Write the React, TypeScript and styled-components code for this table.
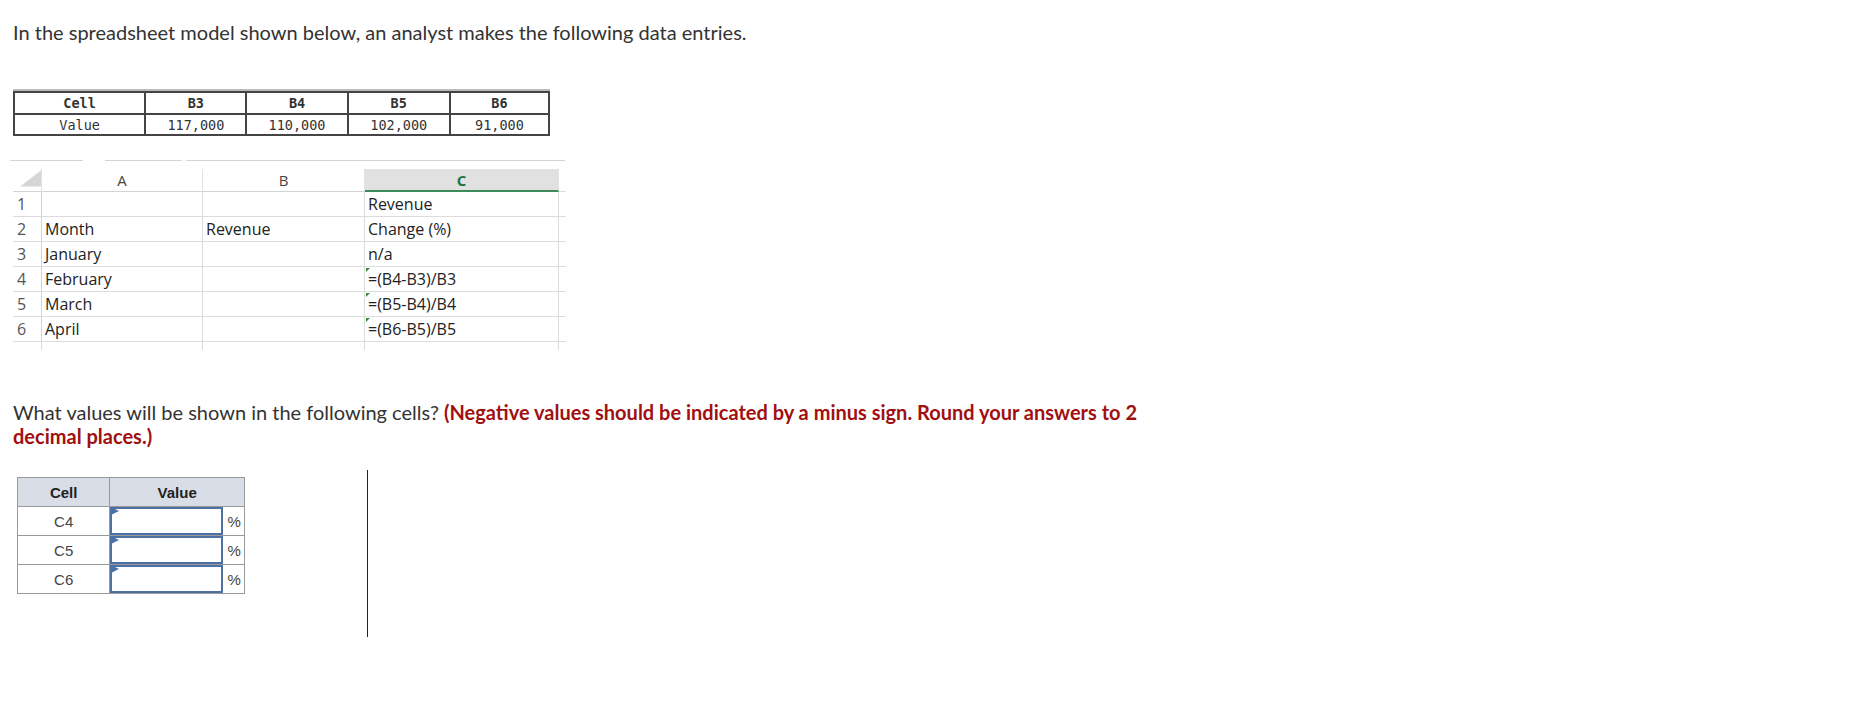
import styled, { createGlobalStyle } from "styled-components";

const GlobalStyle = createGlobalStyle`
  body {
    margin: 0;
    background: #fff;
  }
`;

// 입력 데이터
const entries = [
  { cell: "B3", value: "117,000", w: 101 },
  { cell: "B4", value: "110,000", w: 101 },
  { cell: "B5", value: "102,000", w: 102 },
  { cell: "B6", value: "91,000", w: 99 },
];

// 엑셀 시트 행
const sheetRows = [
  { n: 1, a: "", b: "", c: "Revenue", flag: false },
  { n: 2, a: "Month", b: "Revenue", c: "Change (%)", flag: false },
  { n: 3, a: "January", b: "", c: "n/a", flag: false },
  { n: 4, a: "February", b: "", c: "=(B4-B3)/B3", flag: true },
  { n: 5, a: "March", b: "", c: "=(B5-B4)/B4", flag: true },
  { n: 6, a: "April", b: "", c: "=(B6-B5)/B5", flag: true },
];

const answers = ["C4", "C5", "C6"];

export default function App() {
  return (
    <>
      <GlobalStyle />
      <Page>
        <Intro>
          In the spreadsheet model shown below, an analyst makes the following
          data entries.
        </Intro>

        <DataTable>
          <colgroup>
            <col style={{ width: 131 }} />
            {entries.map((e) => (
              <col key={e.cell} style={{ width: e.w }} />
            ))}
          </colgroup>
          <tbody>
            <tr>
              <DataHead>Cell</DataHead>
              {entries.map((e) => (
                <DataHead key={e.cell}>{e.cell}</DataHead>
              ))}
            </tr>
            <tr>
              <DataCell>Value</DataCell>
              {entries.map((e) => (
                <DataCell key={e.cell}>{e.value}</DataCell>
              ))}
            </tr>
          </tbody>
        </DataTable>

        <Sheet>
          <CropLines>
            <CropLine $w={73} />
            <CropLine $w={77} />
            <CropLine $w={379} />
          </CropLines>
          <SheetGrid>
            <Corner>
              <svg width="22" height="17" viewBox="0 0 22 17">
                <polygon points="22,0 22,17 0,17" fill="#d6d6d6" />
              </svg>
            </Corner>
            <ColHead>A</ColHead>
            <ColHead>B</ColHead>
            <ColHead $active>C</ColHead>
            <Stub />
            {sheetRows.map((r) => (
              <Row key={r.n}>
                <RowNum>{r.n}</RowNum>
                <SheetCell>{r.a}</SheetCell>
                <SheetCell>{r.b}</SheetCell>
                <SheetCell $flag={r.flag}>{r.c}</SheetCell>
                <Stub />
              </Row>
            ))}
            <Row>
              <TailCell />
              <TailCell />
              <TailCell />
              <TailCell />
              <Stub $tail />
            </Row>
          </SheetGrid>
        </Sheet>

        <Question>
          What values will be shown in the following cells?{" "}
          <Hint>
            (Negative values should be indicated by a minus sign. Round your
            answers to 2
          </Hint>{" "}
          <Hint>decimal places.)</Hint>
        </Question>

        <AnswerArea>
          <AnswerTable>
            <colgroup>
              <col style={{ width: 92 }} />
              <col style={{ width: 134 }} />
            </colgroup>
            <thead>
              <tr>
                <AnswerHead>Cell</AnswerHead>
                <AnswerHead>Value</AnswerHead>
              </tr>
            </thead>
            <tbody>
              {answers.map((a) => (
                <tr key={a}>
                  <AnswerCell>{a}</AnswerCell>
                  <ValueCell>
                    <ValueRow>
                      <InputWrap>
                        <Flag />
                        <ValueInput type="text" aria-label={a} />
                      </InputWrap>
                      <Percent>%</Percent>
                    </ValueRow>
                  </ValueCell>
                </tr>
              ))}
            </tbody>
          </AnswerTable>
          <Divider />
        </AnswerArea>
      </Page>
    </>
  );
}

const Page = styled.div`
  padding: 18px 0 60px 13px;
  font-family: Lato, "Open Sans", sans-serif;
  color: #333;
`;

const Intro = styled.p`
  margin: 0;
  font-size: 20px;
  line-height: 28px;
  color: #333;
`;

const DataTable = styled.table`
  margin-top: 45px;
  table-layout: fixed;
  width: 537px;
  border-collapse: collapse;
  border: 2px solid #444;
  box-shadow: 0 -2px 0 #bbb;
  font-family: "DejaVu Sans Mono", "Liberation Mono", monospace;
  font-size: 13.5px;
  color: #333;
`;

const DataHead = styled.td`
  height: 20px;
  padding: 0;
  border: 2px solid #444;
  text-align: center;
  font-weight: bold;
`;

const DataCell = styled.td`
  height: 19px;
  padding: 0;
  border: 2px solid #444;
  text-align: center;
`;

const Sheet = styled.div`
  margin-top: 24px;
  width: 553px;
  font-family: "Open Sans", "Noto Sans", sans-serif;
  font-size: 16px;
  color: #222;
`;

const CropLines = styled.div`
  display: flex;
  gap: 22px;
  height: 8px;
  margin-left: -3px;
`;

const CropLine = styled.div<{ $w: number }>`
  width: ${({ $w }) => $w}px;
  height: 1px;
  background: #d4d4d4;
  &:nth-child(3) {
    margin-left: -18px;
  }
`;

const SheetGrid = styled.div`
  display: grid;
  grid-template-columns: 29px 161px 162px 194px 7px;
  grid-template-rows: 24px repeat(6, 25px) 8px;
`;

const Row = styled.div`
  display: contents;
`;

const Corner = styled.div`
  display: flex;
  align-items: flex-end;
  justify-content: flex-end;
  padding: 0 0 4px 7px;
  border-bottom: 1px solid #d4d4d4;
  border-right: 1px solid #e2e2e2;
`;

const ColHead = styled.div<{ $active?: boolean }>`
  display: flex;
  align-items: center;
  justify-content: center;
  margin-top: 1px;
  background: ${({ $active }) => ($active ? "#e1e1e1" : "#fff")};
  color: ${({ $active }) => ($active ? "#217346" : "#444")};
  font-weight: ${({ $active }) => ($active ? 700 : 400)};
  font-size: 15px;
  border-bottom: ${({ $active }) => ($active ? "2px solid #3f8a5c" : "1px solid #d4d4d4")};
  border-right: 1px solid #e2e2e2;
`;

const RowNum = styled.div`
  display: flex;
  align-items: center;
  padding-left: 4px;
  color: #555;
  border-bottom: 1px solid #dcdcdc;
  border-right: 1px solid #d4d4d4;
`;

const SheetCell = styled.div<{ $flag?: boolean }>`
  position: relative;
  display: flex;
  align-items: center;
  padding-left: 3px;
  white-space: nowrap;
  border-bottom: 1px solid #dcdcdc;
  border-right: 1px solid #dcdcdc;

  &::before {
    content: "";
    display: ${({ $flag }) => ($flag ? "block" : "none")};
    position: absolute;
    top: 1px;
    left: 1px;
    border-top: 4px solid #3a8a3a;
    border-right: 4px solid transparent;
  }
`;

const Stub = styled.div<{ $tail?: boolean }>`
  border-bottom: ${({ $tail }) => ($tail ? "none" : "1px solid #dcdcdc")};
`;

const TailCell = styled.div`
  border-right: 1px solid #dcdcdc;
`;

const Question = styled.p`
  margin: 50px 0 0;
  width: 1165px;
  font-size: 20px;
  line-height: 24px;
  color: #333;
`;

const Hint = styled.strong`
  color: #a01010;
  font-weight: 700;
`;

const AnswerArea = styled.div`
  display: flex;
  align-items: flex-start;
  margin-top: 22px;
`;

const AnswerTable = styled.table`
  margin: 7px 0 0 4px;
  table-layout: fixed;
  width: 228px;
  border-collapse: collapse;
  border: 1px solid #9a9a9a;
  font-family: "Liberation Sans", Arial, sans-serif;
  font-size: 15px;
`;

const AnswerHead = styled.th`
  height: 28px;
  padding: 0;
  background: #d9dde6;
  border: 1px solid #9a9a9a;
  color: #222;
  font-weight: bold;
  text-align: center;
`;

const AnswerCell = styled.td`
  height: 28px;
  padding: 0;
  border: 1px solid #9a9a9a;
  color: #444;
  text-align: center;
`;

const ValueCell = styled.td`
  height: 28px;
  padding: 0;
  border: 1px solid #9a9a9a;
`;

const ValueRow = styled.div`
  display: flex;
  align-items: center;
`;

const InputWrap = styled.div`
  position: relative;
  width: 113px;
  height: 28px;
`;

const Flag = styled.span`
  position: absolute;
  top: 0;
  left: 1px;
  border-left: 8px solid #4a72a8;
  border-top: 4px solid transparent;
  border-bottom: 4px solid transparent;
`;

const ValueInput = styled.input`
  box-sizing: border-box;
  width: 113px;
  height: 28px;
  margin: 0;
  padding: 0 4px;
  border: 2px solid #4d6fa3;
  background: #fff;
  outline: none;
`;

const Percent = styled.span`
  flex: 1;
  padding-left: 4px;
  color: #444;
  font-size: 15px;
`;

const Divider = styled.div`
  width: 0;
  height: 167px;
  margin-left: 122px;
  border-left: 1.5px solid #222;
`;
